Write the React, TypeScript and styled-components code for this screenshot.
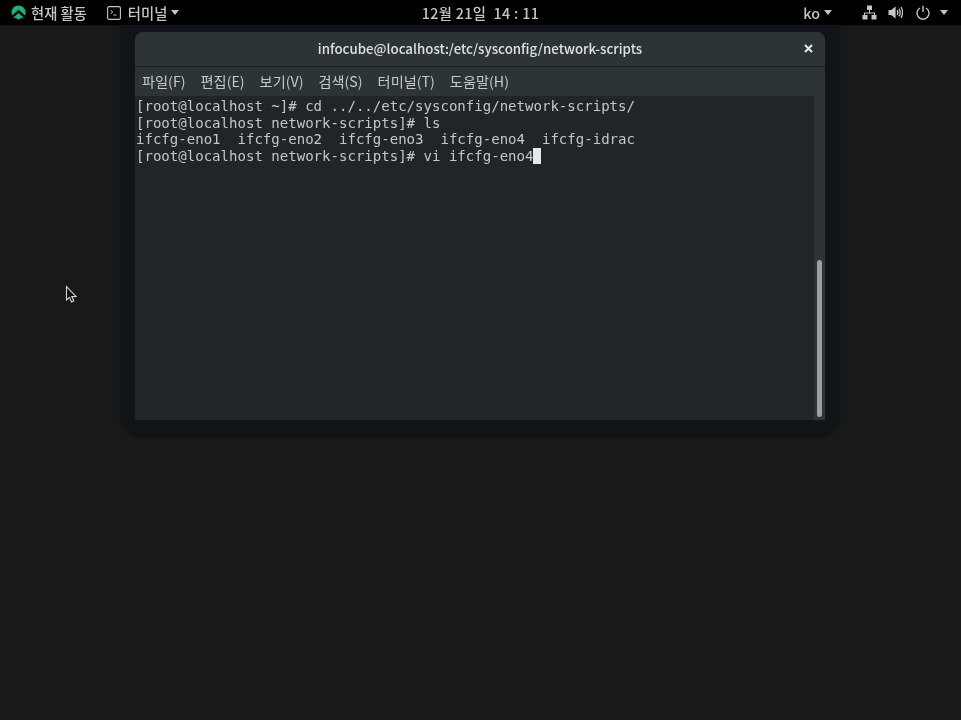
import React from "react";
import styled, { createGlobalStyle } from "styled-components";

const Global = createGlobalStyle`
  html, body { margin: 0; padding: 0; background: #191919; }
  #root { width: 961px; height: 720px; overflow: hidden; }
`;

const Desktop = styled.div`
  width: 961px;
  height: 720px;
  background: #191919;
  display: flex;
  flex-direction: column;
  font-family: "Noto Sans CJK KR", "Noto Sans", sans-serif;
  filter: blur(0.35px);
`;

const TopBar = styled.header`
  height: 25px;
  flex: none;
  background: #000;
  color: #c4c6c4;
  font-size: 14.3px;
  font-weight: 500;
  display: grid;
  grid-template-columns: 1fr auto 1fr;
  align-items: center;
`;

const BarLeft = styled.div`
  display: flex;
  align-items: center;
  padding-left: 11px;
`;

const BarRight = styled.div`
  display: flex;
  align-items: center;
  justify-content: flex-end;
  padding-right: 13px;
`;

const BarItem = styled.div<{ $ml?: number; $gap?: number }>`
  display: flex;
  align-items: center;
  gap: ${(p) => p.$gap ?? 5}px;
  margin-left: ${(p) => p.$ml ?? 0}px;
  line-height: 25px;
  white-space: nowrap;
`;

const Clock = styled.div`
  font-size: 14.3px;
  letter-spacing: 0.35px;
  white-space: pre;
  line-height: 25px;
`;

const Caret = styled.span<{ $ml?: number }>`
  width: 0;
  height: 0;
  margin-left: ${(p) => p.$ml ?? 0}px;
  border-left: 4.5px solid transparent;
  border-right: 4.5px solid transparent;
  border-top: 5px solid #c4c6c4;
`;

const Workspace = styled.main`
  position: relative;
  flex: 1;
  border-top: 1px solid #121212;
`;

const Shadow = styled.div`
  position: absolute;
  left: 120px;
  top: -1px;
  width: 720px;
  height: 412px;
  background: #101416;
  border-radius: 0 0 22px 22px;
  box-shadow: 0 0 2px #101416;
`;

const Window = styled.section`
  position: absolute;
  left: 135px;
  top: 6px;
  width: 690px;
  height: 388px;
  display: flex;
  flex-direction: column;
  border-radius: 8px 8px 0 0;
  overflow: hidden;
  background: #202529;
`;

const Header = styled.div`
  position: relative;
  height: 32px;
  padding-bottom: 2px;
  flex: none;
  background: #2d3436;
  border-bottom: 1px solid #191d1e;
  display: flex;
  align-items: center;
  justify-content: center;
  color: #dfe1df;
  font-size: 13.3px;
  font-weight: 500;
`;

const Close = styled.svg`
  position: absolute;
  right: 12px;
  top: 12px;
`;

const MenuBar = styled.nav`
  height: 29px;
  flex: none;
  background: #2d3436;
  display: flex;
  align-items: center;
  gap: 15px;
  padding: 0 0 1px 7px;
  box-sizing: border-box;
  color: #c6c9c7;
  font-size: 14.2px;
`;

const MenuItem = styled.span`
  white-space: nowrap;
`;

const Body = styled.div`
  flex: 1;
  display: flex;
  min-height: 0;
`;

const Terminal = styled.pre`
  flex: 1;
  margin: 0;
  padding: 2px 0 0 1px;
  background: #202529;
  color: #c4c7c6;
  font-family: "DejaVu Sans Mono", "Liberation Mono", monospace;
  font-size: 14.05px;
  line-height: 16.6px;
`;

const Cursor = styled.span`
  display: inline-block;
  width: 8px;
  height: 16px;
  background: #e6e8e6;
  vertical-align: -3px;
`;

const ScrollTrack = styled.div`
  width: 11px;
  flex: none;
  background: #2d3436;
  display: flex;
  flex-direction: column;
  justify-content: flex-end;
  padding: 0 3px 3px 2.5px;
  box-sizing: border-box;
`;

const ScrollThumb = styled.div`
  height: 157px;
  border-radius: 3px;
  background: #9ba09d;
`;

const Pointer = styled.svg`
  position: absolute;
  left: 65px;
  top: 259px;
`;

export default function App() {
  return (
    <>
      <Global />
      <Desktop>
        <TopBar>
          <BarLeft>
            <BarItem>
              <svg width="15" height="15" viewBox="0 0 15 15">
                <circle cx="7.5" cy="7.5" r="7" fill="#10b981" />
                <path d="M0.8 10.6 L7.5 4.8 L14.2 10.6 L12.6 12.4 L7.5 8 L2.4 12.4 Z" fill="#000" />
                <path d="M11.6 13.2 L7.5 15 L3.4 13.2 L4.4 12.6 L7.5 15 L10.6 12.6 Z" fill="#000" />
              </svg>
              <span>현재 활동</span>
            </BarItem>
            <BarItem $ml={20} $gap={7}>
              <svg width="14" height="14" viewBox="0 0 14 14" fill="none" stroke="#c4c6c4">
                <rect x="0.6" y="0.6" width="12.8" height="12.8" rx="1.5" strokeWidth="1.1" />
                <path d="M3.5 4 L5.7 6 L3.5 7.8" strokeWidth="1" />
                <path d="M6.3 9 H9.5" strokeWidth="1" />
              </svg>
              <span>터미널</span>
              <Caret $ml={-3} />
            </BarItem>
          </BarLeft>
          <Clock>12월 21일  14 : 11</Clock>
          <BarRight>
            <BarItem $gap={4}>
              <span>ko</span>
              <Caret />
            </BarItem>
            <BarItem $ml={30}>
              <svg width="15" height="15" viewBox="0 0 15 15" fill="#c4c6c4">
                <rect x="5" y="0.5" width="5" height="4.5" />
                <rect x="0.5" y="10" width="5" height="4.5" />
                <rect x="9.5" y="10" width="5" height="4.5" />
                <path d="M7 5 h1 v2.5 h5 v2.5 h-1 v-1.5 h-9 v1.5 h-1 v-2.5 h5 Z" />
              </svg>
            </BarItem>
            <BarItem $ml={11}>
              <svg width="15" height="15" viewBox="0 0 15 15" fill="none" stroke="#c4c6c4">
                <path d="M0.5 5 H3.2 L7.6 1.6 V13.4 L3.2 10 H0.5 Z" fill="#c4c6c4" stroke="none" />
                <path d="M9.2 5.3 C10.1 6.6 10.1 8.4 9.2 9.7" strokeWidth="1.5" />
                <path d="M11 3.6 C12.5 5.7 12.5 9.3 11 11.4" strokeWidth="1.3" />
                <path d="M13 2 C15 4.9 15 10.1 13 13" strokeWidth="1.3" />
              </svg>
            </BarItem>
            <BarItem $ml={13} $gap={10}>
              <svg width="14" height="15" viewBox="0 0 14 15" fill="none" stroke="#c4c6c4" strokeWidth="1.4">
                <path d="M7 0.8 V7" />
                <path d="M4 3 A6 6 0 1 0 10 3" />
              </svg>
              <Caret />
            </BarItem>
          </BarRight>
        </TopBar>
        <Workspace>
          <Shadow />
          <Window>
            <Header>
              <span>infocube@localhost:/etc/sysconfig/network-scripts</span>
              <Close width="9" height="9" viewBox="0 0 9 9" stroke="#e8eae8" strokeWidth="2">
                <path d="M1 1 L8 8 M8 1 L1 8" />
              </Close>
            </Header>
            <MenuBar>
              <MenuItem>파일(F)</MenuItem>
              <MenuItem>편집(E)</MenuItem>
              <MenuItem>보기(V)</MenuItem>
              <MenuItem>검색(S)</MenuItem>
              <MenuItem>터미널(T)</MenuItem>
              <MenuItem>도움말(H)</MenuItem>
            </MenuBar>
            <Body>
              <Terminal>
                {"[root@localhost ~]# cd ../../etc/sysconfig/network-scripts/\n"}
                {"[root@localhost network-scripts]# ls\n"}
                {"ifcfg-eno1  ifcfg-eno2  ifcfg-eno3  ifcfg-eno4  ifcfg-idrac\n"}
                {"[root@localhost network-scripts]# vi ifcfg-eno4"}
                <Cursor />
              </Terminal>
              <ScrollTrack>
                <ScrollThumb />
              </ScrollTrack>
            </Body>
          </Window>
          <Pointer width="13" height="19" viewBox="0 0 13 19">
            <path d="M1.5 1.5 V15 L4.5 12.4 L6.5 17 L8.8 16 L6.8 11.6 L11 11.4 Z" fill="#111" stroke="#d8d8d8" strokeWidth="1.1" />
          </Pointer>
        </Workspace>
      </Desktop>
    </>
  );
}
